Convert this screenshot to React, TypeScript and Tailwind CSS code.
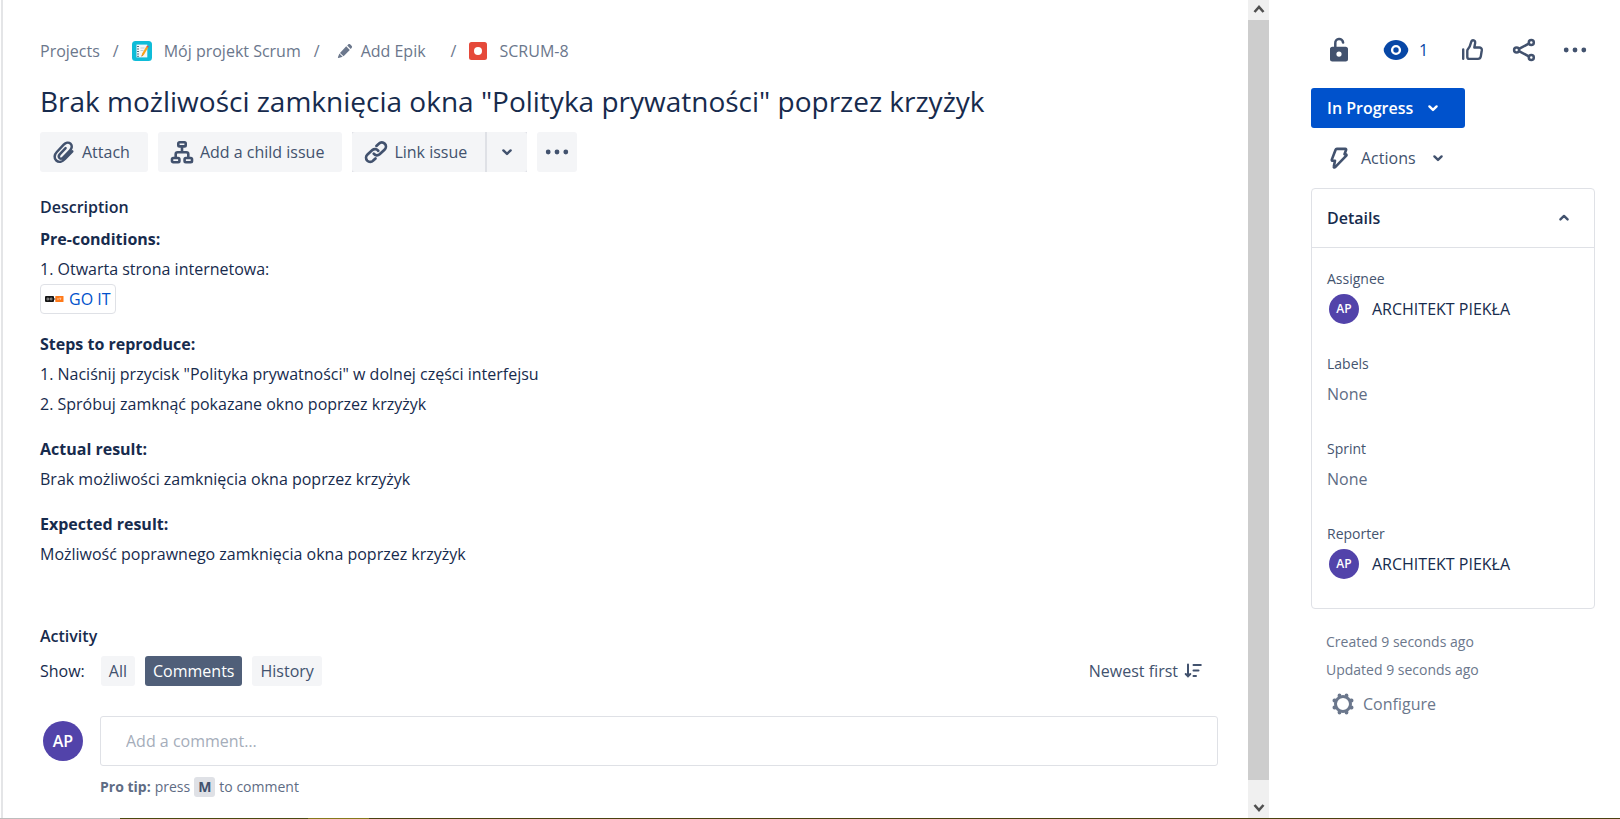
import type { ReactNode } from "react";

function ChevronDown() {
  return (
    <svg viewBox="0 0 24 24" className="size-6" fill="none" stroke="currentColor" strokeWidth="2.4" strokeLinecap="round" strokeLinejoin="round" aria-hidden="true">
      <path d="M8.400 10.400 12 13.900 15.600 10.400" />
    </svg>
  );
}

function ChevronUp() {
  return (
    <svg viewBox="0 0 24 24" className="size-6" fill="none" stroke="currentColor" strokeWidth="2.4" strokeLinecap="round" strokeLinejoin="round" aria-hidden="true">
      <path d="M8.400 13.400 12 9.900 15.600 13.400" />
    </svg>
  );
}

function ScrollArrow({ up = false }: { up?: boolean }) {
  return (
    <svg viewBox="0 0 20 20" className="size-5" fill="none" stroke="#505050" strokeWidth="2.6" aria-hidden="true">
      <path d={up ? "M5.5 12 10 7 14.5 12" : "M5.5 7 10 12 14.5 7"} />
    </svg>
  );
}

function Dots() {
  return (
    <svg viewBox="0 0 24 24" className="size-6" fill="currentColor" aria-hidden="true">
      <circle cx="3.2" cy="12" r="2.4" />
      <circle cx="12" cy="12" r="2.4" />
      <circle cx="20.8" cy="12" r="2.4" />
    </svg>
  );
}

function NotepadIcon() {
  return (
    <svg viewBox="0 0 20 20" className="size-5" aria-hidden="true">
      <rect width="20" height="20" rx="3.5" fill="#0fbcd8" />
      <path d="M4.5 3.6h10.8v12.8H4.5z" fill="#f4f8fa" />
      <path d="M5 5.5h2M5 8h2M5 10.500h2M5 13h2M5 15.300h2" stroke="#56707f" strokeWidth="1" />
      <path d="M8.500 7h4M8.500 9.500h3" stroke="#b8cbd6" strokeWidth="0.9" />
      <path d="M14.300 5.600 10 12.800l-.4 2.600 2.200-1.500 4.300-7.200z" fill="#f7a21b" />
      <path d="m14.300 5.600.8-1.200 1.800 1.100-.8 1.200z" fill="#e5484d" />
      <path d="m9.800 14.200-.2 1.200 1-.7z" fill="#3a3a3a" />
    </svg>
  );
}

function PencilIcon() {
  return (
    <svg viewBox="0 0 16 16" className="size-4" fill="currentColor" aria-hidden="true">
      <path d="M9.200 3.300 12.800 6.900 6.600 13.300 3 9.900zM10.200 2.400l1.200-1.100c.5-.4 1.200-.4 1.700 0l1.700 1.700c.4.500.4 1.200 0 1.700l-1.100 1.200zM2.400 10.500l3.300 3.300L1.600 15c-.5.100-.8-.2-.7-.7z" />
    </svg>
  );
}

function BugIcon() {
  return (
    <svg viewBox="0 0 18 18" className="size-[18px]" aria-hidden="true">
      <rect width="18" height="18" rx="2.500" fill="#e5493a" />
      <circle cx="9" cy="9" r="4" fill="#fff" />
    </svg>
  );
}

function AttachIcon() {
  return (
    <svg viewBox="0 0 24 24" className="size-6" fill="none" stroke="currentColor" strokeWidth="2.500" strokeLinecap="round" strokeLinejoin="round" aria-hidden="true">
      <path d="M20.300 11.300 13 19c-2.700 2.800-6.200 3.800-8.700 1.500-2.600-2.400-1.900-6 .5-8.500l6.900-7.300c2-2.100 4.900-2.800 6.800-1 2 1.900 1.500 4.600-.4 6.600l-6.700 7.100c-1.200 1.300-2.800 1.700-3.900.7-1.100-1.100-.8-2.600.4-3.900l5.700-6" />
    </svg>
  );
}

function ChildIcon() {
  return (
    <svg viewBox="0 0 24 24" className="size-6" fill="none" stroke="currentColor" strokeWidth="2.600" strokeLinejoin="round" aria-hidden="true">
      <rect x="8.300" y="2.200" width="7.400" height="4.200" rx="1.200" />
      <rect x="2" y="18" width="7.400" height="4.200" rx="1.200" />
      <rect x="14.600" y="18" width="7.400" height="4.200" rx="1.200" />
      <path d="M12 6.600v5.600M5.700 17.600v-3.400c0-1.200.8-2 2-2h8.600c1.200 0 2 .8 2 2v3.400" />
    </svg>
  );
}

function LinkIcon() {
  return (
    <svg viewBox="0 0 24 24" className="size-6" fill="none" stroke="currentColor" strokeWidth="2.700" strokeLinecap="round" strokeLinejoin="round" aria-hidden="true">
      <path d="M9.700 13.700c1.500 1.900 4.100 2.200 5.900.6l4.900-4.600c1.800-1.700 1.900-4.300.3-6-1.700-1.700-4.300-1.700-6 0l-2.400 2.200" />
      <path d="M14.300 10.800c-1.500-1.900-4.100-2.300-5.900-.7L3.500 14.600c-1.800 1.700-1.900 4.300-.3 6 1.700 1.700 4.300 1.700 6 0l2.300-2.200" />
    </svg>
  );
}

function LockIcon() {
  return (
    <svg viewBox="0 0 24 26" className="h-[26px] w-6" aria-hidden="true">
      <path d="M8.300 12V6.200a3.900 3.900 0 0 1 7.800-.6" fill="none" stroke="currentColor" strokeWidth="2.500" strokeLinecap="round" />
      <path fillRule="evenodd" fill="currentColor" d="M5.300 9.800h13.400c1.300 0 2.300 1 2.300 2.200v10.200c0 1.300-1 2.300-2.300 2.300H5.300C4 24.500 3 23.500 3 22.200V12c0-1.200 1-2.200 2.300-2.200zM12 14.500a2.600 2.600 0 1 0 0 5.200 2.600 2.600 0 0 0 0-5.200z" />
    </svg>
  );
}

function EyeIcon() {
  return (
    <svg viewBox="0 0 26 22" className="h-[22px] w-[26px]" aria-hidden="true">
      <path d="M13 1c6.300 0 10.400 4 12 8.300.4 1.100.4 2.300 0 3.400C23.400 17 19.300 21 13 21S2.600 17 1 12.700c-.4-1.100-.4-2.300 0-3.400C2.600 5 6.700 1 13 1z" fill="#0747a6" />
      <circle cx="13" cy="11" r="3.900" fill="none" stroke="#fff" strokeWidth="2.400" />
    </svg>
  );
}

function ThumbIcon() {
  return (
    <svg viewBox="0 0 24 24" className="size-6" fill="none" stroke="currentColor" strokeWidth="2.400" strokeLinecap="round" strokeLinejoin="round" aria-hidden="true">
      <path d="M3.200 11.500v9.200M7.300 12.700c0-.7.200-1 .6-1.500 1.800-2.100 2.600-4.100 3.200-6.900.3-1.300.9-2 2-2 1.700 0 2.300 1.400 2 3.100l-.8 4.100h5c1.700 0 2.700 1.200 2.500 2.700l-1 6.200c-.3 1.700-1.200 2.500-2.800 2.500H9.200c-1.200 0-1.900-.8-1.900-1.900z" />
    </svg>
  );
}

function ShareIcon() {
  return (
    <svg viewBox="0 0 24 24" className="size-6" fill="none" stroke="currentColor" strokeWidth="2.500" aria-hidden="true">
      <circle cx="4.600" cy="12" r="2.500" />
      <circle cx="19.300" cy="4.500" r="2.500" />
      <circle cx="19.300" cy="19.500" r="2.500" />
      <path d="m7 10.900 9.800-5.200M7 13.100l9.800 5.200" />
    </svg>
  );
}

function BoltIcon() {
  return (
    <svg viewBox="0 0 24 24" className="size-6" fill="none" stroke="currentColor" strokeWidth="2.600" strokeLinejoin="round" strokeLinecap="round" aria-hidden="true">
      <path d="M9.800 2.900h8.600c.6 0 .9.500.7 1l-1.600 4.400h1.200c.8 0 1.100.7.600 1.300L8.200 21.200c-.7.700-1.600.2-1.400-.6l1.200-5.900H5.600c-.6 0-1-.5-.8-1.100l3.800-9.900c.2-.5.600-.8 1.200-.8z" />
    </svg>
  );
}

function GearIcon() {
  return (
    <svg viewBox="0 0 24 24" className="size-6" aria-hidden="true">
      <circle cx="12" cy="12" r="7.500" fill="none" stroke="currentColor" strokeWidth="3" />
      <g fill="none" stroke="currentColor" strokeWidth="3.800" strokeLinecap="round">
        <path d="M8.500 3.400v.6M15.500 3.400v.6M8.500 20v.6M15.500 20v.6M3.400 8.500H4M3.400 15.500H4M20 8.500h.6M20 15.500h.6" />
      </g>
    </svg>
  );
}

function SortIcon() {
  return (
    <svg viewBox="0 0 18 16" className="h-4 w-[18px]" fill="none" stroke="currentColor" strokeWidth="2" strokeLinecap="round" strokeLinejoin="round" aria-hidden="true">
      <path d="M4 1.500v12M1.700 11 4 13.300 6.300 11M9.500 2h7.300M9.500 7.500h5M9.500 13h2.500" />
    </svg>
  );
}

function GoItLogo() {
  return (
    <svg viewBox="0 0 19 8" className="h-2 w-[19px]" aria-hidden="true">
      <rect y="1" width="9" height="6" rx="1" fill="#151515" />
      <path d="M9 3.500h1.500v1H9z" fill="#151515" />
      <rect x="10.300" y="1" width="8.200" height="6" rx="0.500" fill="#ff7a1a" />
      <g fill="none" stroke="#fff" strokeWidth="0.800" opacity="0.700">
        <circle cx="2.900" cy="4" r="1" />
        <circle cx="6.100" cy="4" r="1" />
        <path d="M13 3v2M14.300 3.200h2M15.300 3.200V5" />
      </g>
    </svg>
  );
}

function Section({ title, children }: { title: string; children: ReactNode }) {
  return (
    <div className="mb-[15px]">
      <h3 className="font-bold">{title}</h3>
      {children}
    </div>
  );
}

function Field({ label, children }: { label: string; children: ReactNode }) {
  return (
    <div className="mb-[25px]">
      <dt className="text-sm leading-[30px] font-medium text-[#44546f]">{label}</dt>
      <dd className="flex h-[30px] items-center">{children}</dd>
    </div>
  );
}

function Person() {
  return (
    <span className="flex items-center gap-[13px] pl-0.5 text-[#172b4d]">
      <span className="grid size-[30px] place-items-center rounded-full bg-[#5243aa] text-xs font-semibold text-white">AP</span>
      ARCHITEKT PIEKŁA
    </span>
  );
}

export default function App() {
  return (
    <div className="flex min-h-screen flex-col bg-white font-['Open_Sans','Noto_Sans',sans-serif] text-base leading-[30px] text-[#172b4d]">
      <div className="flex flex-1">
        <main className="ml-px flex-1 border-l-2 border-[#e4e5e7] pt-9 pr-[30px] pl-[37px]">
          <nav aria-label="Breadcrumb" className="flex items-center text-[#6b778c]">
            <a href="#projects">Projects</a>
            <span className="mx-[13px]">/</span>
            <a href="#project" className="flex items-center gap-3"><NotepadIcon />Mój projekt Scrum</a>
            <span className="mx-[13px]">/</span>
            <button type="button" className="mr-2 flex items-center gap-2 px-1"><PencilIcon />Add Epik</button>
            <span className="mx-[13px]">/</span>
            <a href="#issue" className="flex items-center gap-3"><BugIcon />SCRUM-8</a>
          </nav>

          <h1 className="mt-3.5 mb-2.5 text-[28px] leading-[42px]">Brak możliwości zamknięcia okna "Polityka prywatności" poprzez krzyżyk</h1>

          <div className="flex h-10 gap-2.5 text-[#42526e] [&_button]:bg-[#f4f5f7]">
            <button type="button" className="flex items-center gap-1.5 rounded-[3px] pr-[18px] pl-3"><AttachIcon />Attach</button>
            <button type="button" className="flex items-center gap-1.5 rounded-[3px] pr-[18px] pl-3"><ChildIcon />Add a child issue</button>
            <div className="flex gap-0.5 bg-[#dfe1e6]">
              <button type="button" className="flex items-center gap-1.5 rounded-l-[3px] pr-[18px] pl-3"><LinkIcon />Link issue</button>
              <button type="button" aria-label="More link options" className="grid w-10 place-items-center rounded-r-[3px]"><ChevronDown /></button>
            </div>
            <button type="button" aria-label="More actions" className="grid w-10 place-items-center rounded-[3px]"><Dots /></button>
          </div>

          <h2 className="mt-5 mb-0.5 font-semibold">Description</h2>
          <Section title="Pre-conditions:">
            <p>1. Otwarta strona internetowa:</p>
            <p className="flex">
              <a href="#goit" className="flex h-[30px] items-center gap-[5px] rounded-[4px] border border-[#dfe1e6] px-1 text-[#0052cc]"><GoItLogo />GO IT</a>
            </p>
          </Section>
          <Section title="Steps to reproduce:">
            <p>1. Naciśnij przycisk "Polityka prywatności" w dolnej części interfejsu</p>
            <p>2. Spróbuj zamknąć pokazane okno poprzez krzyżyk</p>
          </Section>
          <Section title="Actual result:">
            <p>Brak możliwości zamknięcia okna poprzez krzyżyk</p>
          </Section>
          <Section title="Expected result:">
            <p>Możliwość poprawnego zamknięcia okna poprzez krzyżyk</p>
          </Section>

          <h2 className="mt-[52px] font-semibold">Activity</h2>
          <div className="mt-[5px] flex items-center gap-2.5 text-[#42526e]">
            <span className="mr-1.5 text-[#172b4d]">Show:</span>
            <button type="button" className="rounded-[3px] bg-[#f4f5f7] px-2">All</button>
            <button type="button" aria-pressed="true" className="rounded-[3px] bg-[#505f79] px-2 text-white">Comments</button>
            <button type="button" className="rounded-[3px] bg-[#f4f5f7] px-2">History</button>
            <button type="button" className="mr-4 ml-auto flex items-center gap-1.5">Newest first<SortIcon /></button>
          </div>

          <div className="mt-[30px] flex gap-[17px] pl-[3px]">
            <span className="mt-[5px] grid size-10 shrink-0 place-items-center rounded-full bg-[#5243aa] font-semibold text-white">AP</span>
            <div className="flex-1">
              <input type="text" aria-label="Add a comment" placeholder="Add a comment…" className="block h-[50px] w-full rounded-[3px] border border-[#dfe1e6] px-[25px] placeholder:text-[#a5adba]" />
              <p className="mt-[11px] flex items-center text-sm leading-5 text-[#5e6c84]">
                <strong className="mr-1">Pro tip:</strong>press
                <kbd className="mx-1 rounded-[3px] bg-[#dfe1e6] px-1 font-['Open_Sans','Noto_Sans',sans-serif] font-bold text-[#42526e]">M</kbd>
                to comment
              </p>
            </div>
          </div>
        </main>

        <div aria-hidden="true" className="flex w-[21px] flex-col items-center bg-[#f0f0f0]">
          <ScrollArrow up />
          <div className="w-full flex-1 bg-[#cdcdcd]" />
          <div className="h-[18px]" />
          <ScrollArrow />
        </div>

        <aside className="w-[351px] pt-[35px] pr-[25px] pl-[42px] text-[#42526e]">
          <div className="flex h-[30px] items-center pr-2 pl-4">
            <button type="button" aria-label="Unlocked" className="mr-8"><LockIcon /></button>
            <button type="button" aria-label="Watchers: 1" className="mr-8 flex items-center gap-2.5 text-[#0747a6]"><EyeIcon />1</button>
            <button type="button" aria-label="Vote" className="mr-7"><ThumbIcon /></button>
            <button type="button" aria-label="Share" className="mr-auto"><ShareIcon /></button>
            <button type="button" aria-label="More"><Dots /></button>
          </div>
          <button type="button" className="mt-[23px] flex h-10 w-[154px] items-center gap-2 rounded-[3px] bg-[#0052cc] pl-4 font-semibold text-white">In Progress<ChevronDown /></button>
          <button type="button" className="mt-[15px] flex items-center gap-2.5 pl-4"><BoltIcon />Actions<ChevronDown /></button>

          <section className="mt-[15px] rounded-[4px] border border-[#dfe1e6]">
            <h2>
              <button type="button" aria-expanded="true" className="flex h-[58px] w-full items-center justify-between pr-[18px] pl-[15px] font-semibold text-[#172b4d]">
                Details<span className="text-[#42526e]"><ChevronUp /></span>
              </button>
            </h2>
            <dl className="border-t border-[#dfe1e6] px-[15px] pt-4 pb-1 text-[#5e6c84]">
              <Field label="Assignee"><Person /></Field>
              <Field label="Labels">None</Field>
              <Field label="Sprint">None</Field>
              <Field label="Reporter"><Person /></Field>
            </dl>
          </section>

          <div className="mt-[19px] pl-[15px] text-sm leading-7 text-[#6b778c]">
            <p>Created 9 seconds ago</p>
            <p>Updated 9 seconds ago</p>
            <button type="button" className="mt-2 flex items-center gap-2 pl-[5px] text-base"><GearIcon />Configure</button>
          </div>
        </aside>
      </div>
      <div aria-hidden="true" className="flex h-px">
        <div className="w-[120px] bg-[#bdbdbd]" />
        <div className="w-[188px] bg-[#4a4a10]" />
        <div className="w-[61px] bg-[#857a1c]" />
        <div className="flex-1 bg-[#4a4210]" />
      </div>
    </div>
  );
}
